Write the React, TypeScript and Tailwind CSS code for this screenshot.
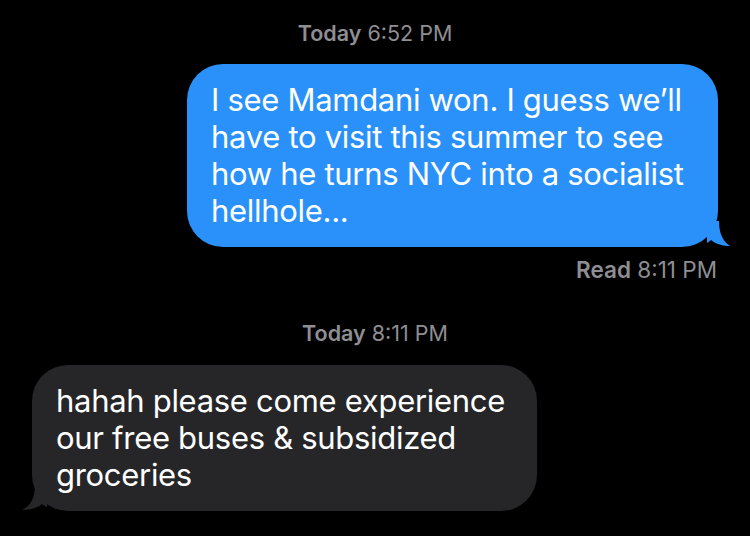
import React from 'react'

function Stamp({ label, time }: { label: string; time: string }) {
  return (
    <div className="text-center text-[21.5px] leading-[26px] text-[#8e8e93]">
      <span className="font-semibold">{label}</span> <span>{time}</span>
    </div>
  )
}

export default function App() {
  return (
    <main
      className="w-[750px] h-[536px] bg-black overflow-hidden flex flex-col"
      style={{ fontFamily: 'Inter, "Noto Sans", sans-serif' }}
    >
      <div className="pt-[20px]">
        <Stamp label="Today" time="6:52 PM" />
      </div>

      <div className="flex justify-end pr-[32px] mt-[18px]">
        <div className="relative w-[531px] h-[183px] bg-[#2a91fa] rounded-[36px] pl-[24px] pr-[16px] py-[17px]">
          <p className="text-white text-[31px] leading-[37px] tracking-[-0.3px] whitespace-nowrap">
            I see Mamdani won. I guess we’ll
            <br />
            have to visit this summer to see
            <br />
            how he turns NYC into a socialist
            <br />
            hellhole...
          </p>
          <svg className="absolute right-[-15px] bottom-0" width="26" height="26" viewBox="0 0 26 26">
            <path d="M0 0 H12 C12 14 17 21 23 25 C16 25 9 23 4 19 C2 21 0 22 0 22 Z" fill="#2a91fa" />
          </svg>
        </div>
      </div>

      <div className="flex justify-end pr-[33px] mt-[10px] text-[22.5px] leading-[26px] text-[#8e8e93]">
        <span className="font-semibold">Read</span>&nbsp;<span>8:11 PM</span>
      </div>

      <div className="mt-[37px]">
        <Stamp label="Today" time="8:11 PM" />
      </div>

      <div className="flex pl-[32px] mt-[19px]">
        <div className="relative w-[505px] h-[146px] bg-[#262629] rounded-[36px] pl-[24px] pr-[16px] py-[17px]">
          <p className="text-white text-[31px] leading-[37px] tracking-[-0.3px] whitespace-nowrap">
            hahah please come experience
            <br />
            our free buses &amp; subsidized
            <br />
            groceries
          </p>
          <svg className="absolute left-[-11px] bottom-0" width="26" height="26" viewBox="0 0 26 26">
            <path d="M26 0 H14 C14 14 9 21 1 25 C9 25 16 23 21 19 C23 21 26 22 26 22 Z" fill="#262629" />
          </svg>
        </div>
      </div>
    </main>
  )
}
